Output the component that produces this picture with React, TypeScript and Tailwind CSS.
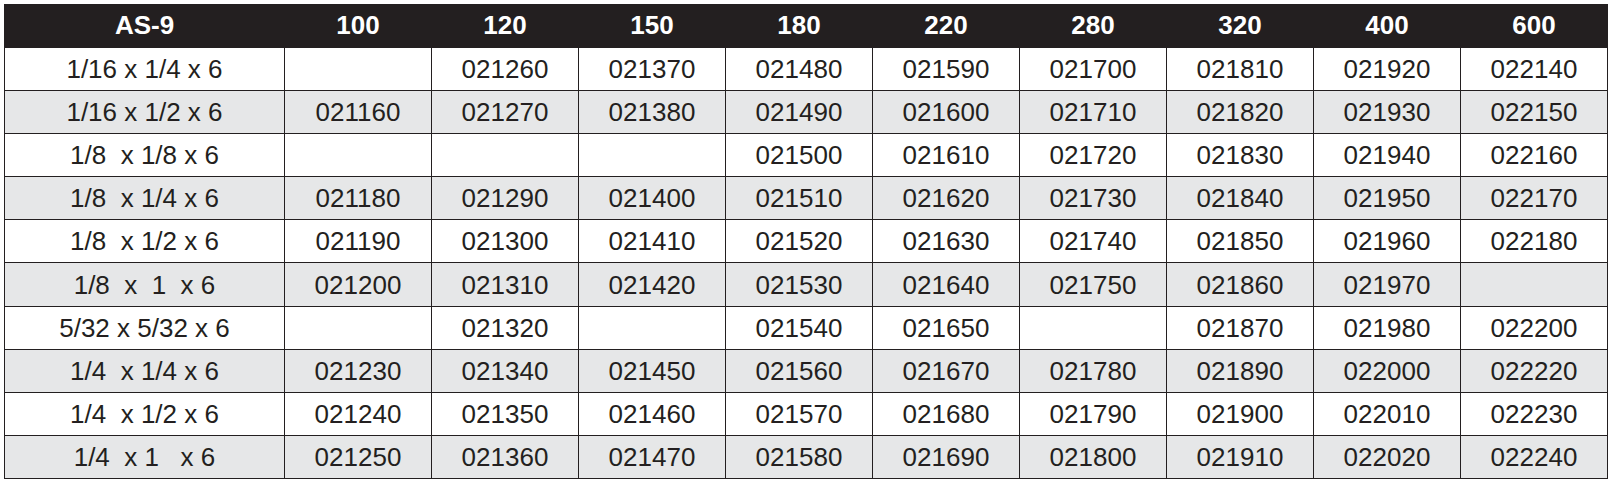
const sizes = ['100', '120', '150', '180', '220', '280', '320', '400', '600'];

const rows: [string, string[]][] = [
  ['1/16 x 1/4 x 6', ['', '021260', '021370', '021480', '021590', '021700', '021810', '021920', '022140']],
  ['1/16 x 1/2 x 6', ['021160', '021270', '021380', '021490', '021600', '021710', '021820', '021930', '022150']],
  ['1/8  x 1/8 x 6', ['', '', '', '021500', '021610', '021720', '021830', '021940', '022160']],
  ['1/8  x 1/4 x 6', ['021180', '021290', '021400', '021510', '021620', '021730', '021840', '021950', '022170']],
  ['1/8  x 1/2 x 6', ['021190', '021300', '021410', '021520', '021630', '021740', '021850', '021960', '022180']],
  ['1/8  x  1  x 6', ['021200', '021310', '021420', '021530', '021640', '021750', '021860', '021970', '']],
  ['5/32 x 5/32 x 6', ['', '021320', '', '021540', '021650', '', '021870', '021980', '022200']],
  ['1/4  x 1/4 x 6', ['021230', '021340', '021450', '021560', '021670', '021780', '021890', '022000', '022220']],
  ['1/4  x 1/2 x 6', ['021240', '021350', '021460', '021570', '021680', '021790', '021900', '022010', '022230']],
  ['1/4  x 1   x 6', ['021250', '021360', '021470', '021580', '021690', '021800', '021910', '022020', '022240']],
];

export default function App() {
  return (
    <div className="bg-white w-[1614px] h-[484px] pt-[4px] pl-[4px] font-['Liberation_Sans',Arial,sans-serif]">
      <table className="w-[1604px] border-collapse table-fixed text-[26px] leading-none">
        <colgroup>
          <col className="w-[280px]" />
          {sizes.map((s) => (
            <col key={s} />
          ))}
        </colgroup>
        <thead>
          <tr className="h-[43px] bg-[#231f20] text-white">
            <th className="font-bold border-x border-[#231f20]">AS-9</th>
            {sizes.map((s) => (
              <th key={s} className="font-bold border-l border-l-white border-r border-r-[#231f20]">
                {s}
              </th>
            ))}
          </tr>
        </thead>
        <tbody className="text-[#231f20]">
          {rows.map(([dim, codes], i) => (
            <tr key={dim} className={`h-[43.2px] ${i % 2 === 1 ? 'bg-[#e6e7e8]' : 'bg-white'}`}>
              <td className="border border-[#231f20] text-center whitespace-pre">{dim}</td>
              {codes.map((c, j) => (
                <td key={j} className="border border-[#231f20] text-center">
                  {c}
                </td>
              ))}
            </tr>
          ))}
        </tbody>
      </table>
    </div>
  );
}
